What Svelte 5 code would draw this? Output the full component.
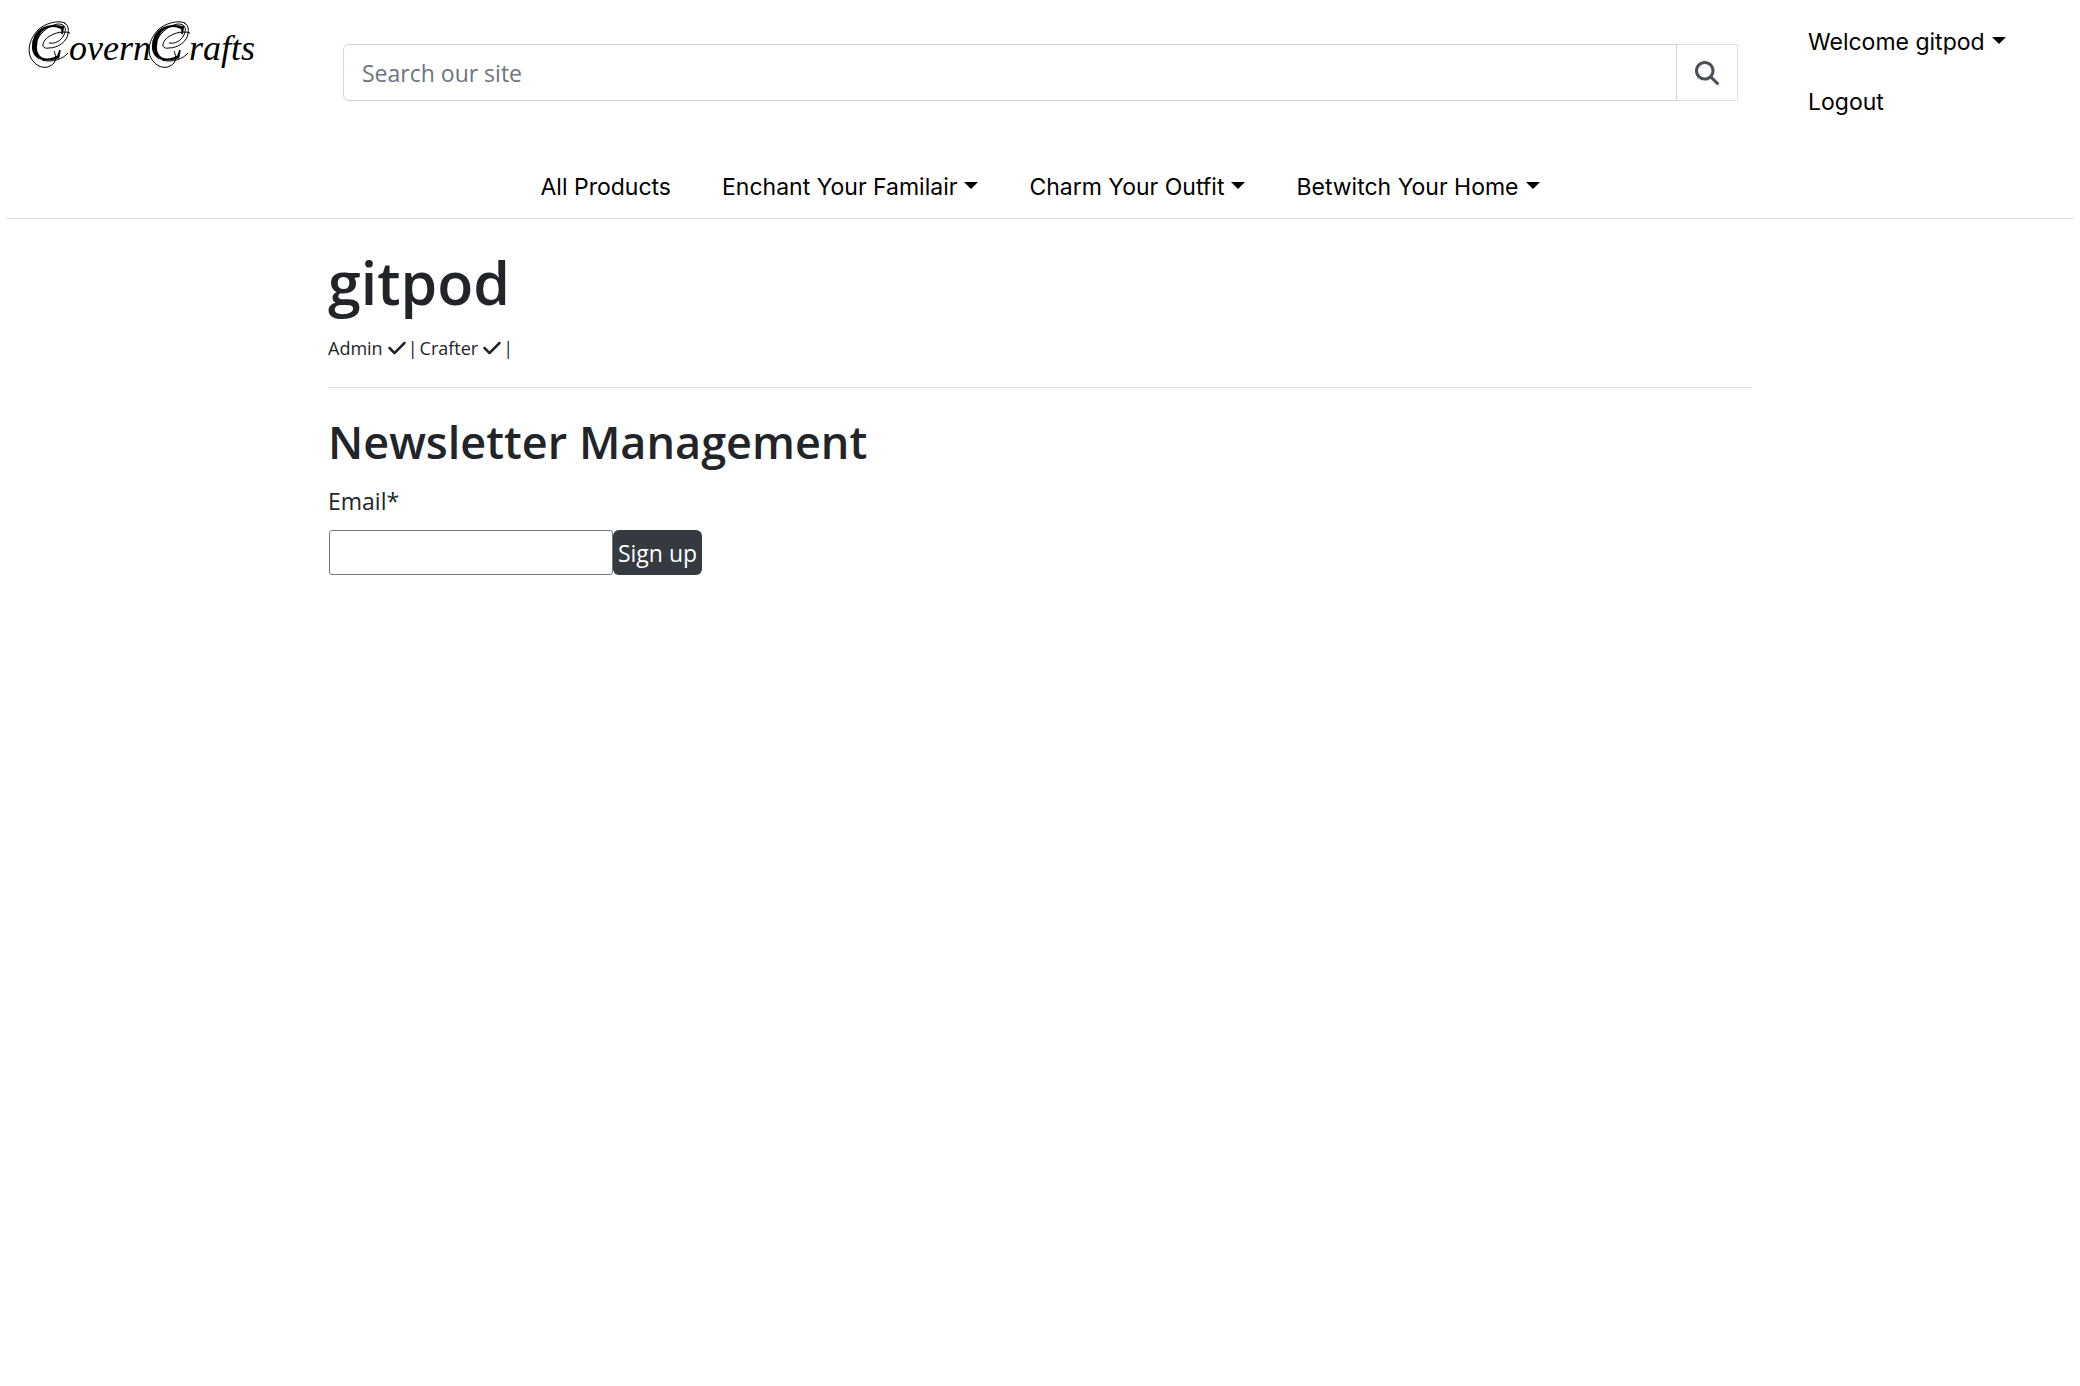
<script>
  const categories = [
    { label: 'All Products', menu: false },
    { label: 'Enchant Your Familair', menu: true },
    { label: 'Charm Your Outfit', menu: true },
    { label: 'Betwitch Your Home', menu: true }
  ];
  const roles = ['Admin', 'Crafter'];
  let query = $state('');
  let email = $state('');
</script>

{#snippet swirl()}
  <path d="M37 6C30 3 17 6 10 13C1 22-2 36 5 44C10 51 20 53 26 46C28 43 28 38 26 34" />
  <path d="M21 26C27 27 33 24 36 18C39 11 37 7 30 7C20 8 9 18 6 31" />
  <path d="M42 16C34 13 22 17 17 23C13 29 15 32 21 31C30 31 40 24 40 16C41 10 39 7 36 6" />
  <path d="M14 43C24 46 35 42 40 36" />
{/snippet}

<header>
  <div class="top">
    <a class="brand" href="#home">
      <svg width="240" height="66" viewBox="0 0 240 66">
        <g fill="none" stroke="#000" stroke-width="1">
          {@render swirl()}
          <g transform="translate(120 0)">{@render swirl()}</g>
        </g>
        <text y="43"><tspan class="initial" x="1">C</tspan><tspan x="41">overn</tspan><tspan class="initial" x="121">C</tspan><tspan x="161">rafts</tspan></text>
      </svg>
    </a>
    <form class="search" onsubmit={(e) => e.preventDefault()}>
      <input type="search" bind:value={query} placeholder="Search our site" aria-label="Search our site" />
      <button aria-label="Search">
        <svg width="24" height="24" viewBox="0 0 512 512"><path fill="#495057" d="M416 208c0 45.900-14.900 88.300-40 122.700L502.600 457.400c12.500 12.500 12.500 32.800 0 45.300s-32.800 12.500-45.300 0L330.700 376c-34.400 25.200-76.800 40-122.700 40C93.100 416 0 322.900 0 208S93.100 0 208 0S416 93.100 416 208zM208 352a144 144 0 1 0 0-288 144 144 0 1 0 0 288z" /></svg>
      </button>
    </form>
    <nav class="account" aria-label="Account">
      <a class="caret" href="#profile">Welcome gitpod</a>
      <a href="#logout">Logout</a>
    </nav>
  </div>
  <nav class="categories" aria-label="Categories">
    {#each categories as c}
      <a class:caret={c.menu} href="#products">{c.label}</a>
    {/each}
  </nav>
</header>

<main>
  <h1>gitpod</h1>
  <p class="roles">
    {#each roles as role}
      <span>{role}</span>
      <svg width="18" height="20" viewBox="0 0 448 512" role="img" aria-label="yes"><path fill="#212529" d="M438.600 105.400c12.500 12.500 12.500 32.800 0 45.300l-256 256c-12.500 12.500-32.800 12.500-45.300 0l-128-128c-12.500-12.500-12.500-32.800 0-45.300s32.800-12.500 45.300 0L160 338.700 393.400 105.400c12.500-12.500 32.800-12.500 45.300 0z" /></svg>
      <span>|</span>
    {/each}
  </p>
  <hr />
  <h2>Newsletter Management</h2>
  <form class="signup" onsubmit={(e) => e.preventDefault()}>
    <label for="email">Email*</label>
    <div class="row">
      <input id="email" type="email" bind:value={email} />
      <button>Sign up</button>
    </div>
  </form>
</main>

<style>
  :global(body) {
    margin: 0;
    background: #fff;
    color: #212529;
    font: 23px/36px 'Open Sans', 'Noto Sans', sans-serif;
  }
  header {
    margin: 0 6px;
    border-bottom: 1px solid #dee2e6;
  }
  .top {
    display: grid;
    grid-template-columns: 337px minmax(0, 1fr) 336px;
    align-items: start;
  }
  .brand {
    display: block;
    padding: 17px 0 0 22px;
  }
  .brand svg {
    display: block;
    overflow: visible;
  }
  .brand text {
    font: italic 36px 'Liberation Serif', serif;
    fill: #000;
  }
  .initial {
    font-size: 52px;
  }
  .search {
    display: flex;
    height: 57px;
    margin-top: 44px;
  }
  input,
  button {
    font: inherit;
    box-sizing: border-box;
  }
  .search input {
    flex: 1;
    min-width: 0;
    padding: 0 18px;
    border: 1px solid #ced4da;
    border-radius: 6px 0 0 6px;
    appearance: none;
    outline: none;
  }
  .search input::placeholder {
    color: #6c757d;
    opacity: 1;
  }
  .search button {
    display: grid;
    place-items: center;
    width: 61px;
    padding: 0;
    border: 1px solid #dee2e6;
    border-left: 0;
    background: #fff;
  }
  nav a {
    color: #000;
    text-decoration: none;
    font-family: Inter, 'Liberation Sans', sans-serif;
    font-size: 23px;
    line-height: 36px;
    white-space: nowrap;
  }
  .account {
    display: flex;
    flex-direction: column;
    align-items: flex-start;
    gap: 24px;
    padding: 24px 0 0 70px;
  }
  .caret::after {
    content: '';
    display: inline-block;
    margin-left: 7px;
    vertical-align: 6px;
    border-top: 7px solid;
    border-right: 7px solid transparent;
    border-left: 7px solid transparent;
  }
  .categories {
    display: flex;
    justify-content: center;
    gap: 51px;
    padding: 49px 0 13px;
  }
  main {
    margin: 0 328px;
  }
  h1,
  h2 {
    margin: 0;
    font-weight: 600;
  }
  h1 {
    padding-top: 27px;
    font-size: 59px;
    line-height: 72px;
  }
  .roles {
    display: flex;
    align-items: center;
    gap: 2px;
    margin: 0;
    padding-top: 12px;
    font-size: 18px;
  }
  .roles svg {
    margin-left: 3px;
  }
  hr {
    height: 1px;
    margin: 21px 0 24px;
    border: 0;
    background: #dee2e6;
  }
  h2 {
    font-size: 45px;
    line-height: 60px;
  }
  label {
    display: block;
    margin: 11px 0 11px;
  }
  .row {
    display: flex;
    height: 45px;
    padding-left: 1px;
  }
  .row input {
    width: 284px;
    border: 1px solid #767676;
    border-radius: 3px;
  }
  .row button {
    width: 89px;
    padding: 0;
    border: 0;
    border-radius: 6px;
    background: #343a40;
    color: #fff;
  }
</style>
